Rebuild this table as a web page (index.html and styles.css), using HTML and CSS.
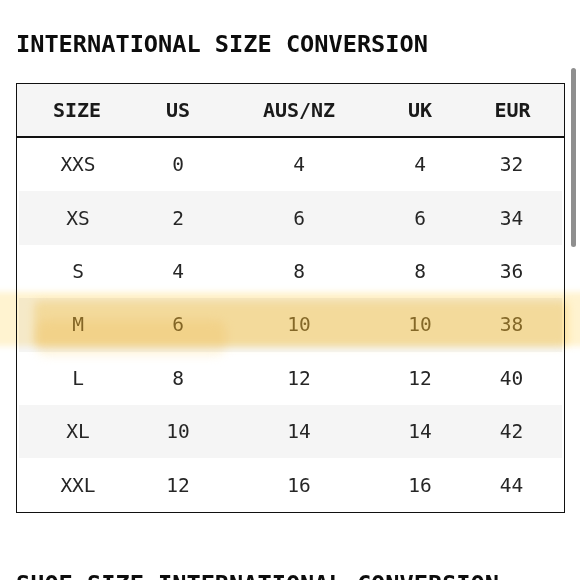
FILE: index.html
```html
<!DOCTYPE html>
<html lang="en">
<head>
<meta charset="utf-8">
<title>International Size Conversion</title>
<link rel="stylesheet" href="styles.css">
</head>
<body>
<div class="page">
  <h2 class="title">INTERNATIONAL SIZE CONVERSION</h2>
  <div class="table">
    <div class="row head">
      <div>SIZE</div><div>US</div><div>AUS/NZ</div><div>UK</div><div>EUR</div>
    </div>
    <div class="body">
      <div class="row"><div>XXS</div><div>0</div><div>4</div><div>4</div><div>32</div></div>
      <div class="row alt"><div>XS</div><div>2</div><div>6</div><div>6</div><div>34</div></div>
      <div class="row"><div>S</div><div>4</div><div>8</div><div>8</div><div>36</div></div>
      <div class="row alt mark"><div>M</div><div>6</div><div>10</div><div>10</div><div>38</div></div>
      <div class="row"><div>L</div><div>8</div><div>12</div><div>12</div><div>40</div></div>
      <div class="row alt"><div>XL</div><div>10</div><div>14</div><div>14</div><div>42</div></div>
      <div class="row"><div>XXL</div><div>12</div><div>16</div><div>16</div><div>44</div></div>
    </div>
  </div>
  <h2 class="title second">SHOE SIZE INTERNATIONAL CONVERSION</h2>

  <div class="hl hl-a"></div>
  <div class="hl hl-b"></div>
  <div class="hl hl-c"></div>
  <div class="scrollbar"></div>
</div>
</body>
</html>
```

FILE: styles.css
```css
html, body {
  margin: 0;
  padding: 0;
  background: #ffffff;
  overflow: hidden;
}

.page {
  position: relative;
  width: 580px;
  height: 580px;
  padding: 30px 15px 0 16px;
  box-sizing: border-box;
  font-family: "DejaVu Sans Mono", "Liberation Mono", monospace;
  color: #262626;
}

.title {
  margin: 0;
  font-size: 23.6px;
  line-height: 28px;
  font-weight: bold;
  color: #0d0d0d;
  white-space: nowrap;
}

.second {
  margin-top: 57px;
}

.table {
  margin-top: 25px;
  width: 549px;
  border: 1px solid #111111;
  box-sizing: border-box;
}

.row {
  display: grid;
  grid-template-columns: 118px 82px 160px 82px 1fr;
  height: 53.4px;
  align-items: center;
  text-align: center;
  font-size: 19.5px;
}

.head {
  grid-template-columns: 120px 82px 160px 82px 1fr;
  height: 52px;
  background: #f5f5f5;
  border-bottom: 2px solid #111111;
  font-weight: bold;
  font-size: 20px;
  color: #1a1a1a;
}

.body {
  padding: 0 2px;
}

.alt {
  background: #f5f5f5;
}

.mark {
  color: #85743e;
}

.hl {
  position: absolute;
  mix-blend-mode: multiply;
  pointer-events: none;
}

.hl-a {
  left: -10px;
  top: 292px;
  width: 600px;
  height: 54px;
  background: #fff3d0;
  filter: blur(3px);
}

.hl-b {
  left: 34px;
  top: 301px;
  width: 534px;
  height: 46px;
  background: #fdefc6;
  filter: blur(4px);
  border-radius: 6px;
}

.hl-c {
  left: 36px;
  top: 320px;
  width: 190px;
  height: 36px;
  background: #fef6e2;
  filter: blur(5px);
  border-radius: 10px;
}

.scrollbar {
  position: absolute;
  left: 571px;
  top: 68px;
  width: 5px;
  height: 179px;
  border-radius: 3px;
  background: #8f8f8f;
}
```
